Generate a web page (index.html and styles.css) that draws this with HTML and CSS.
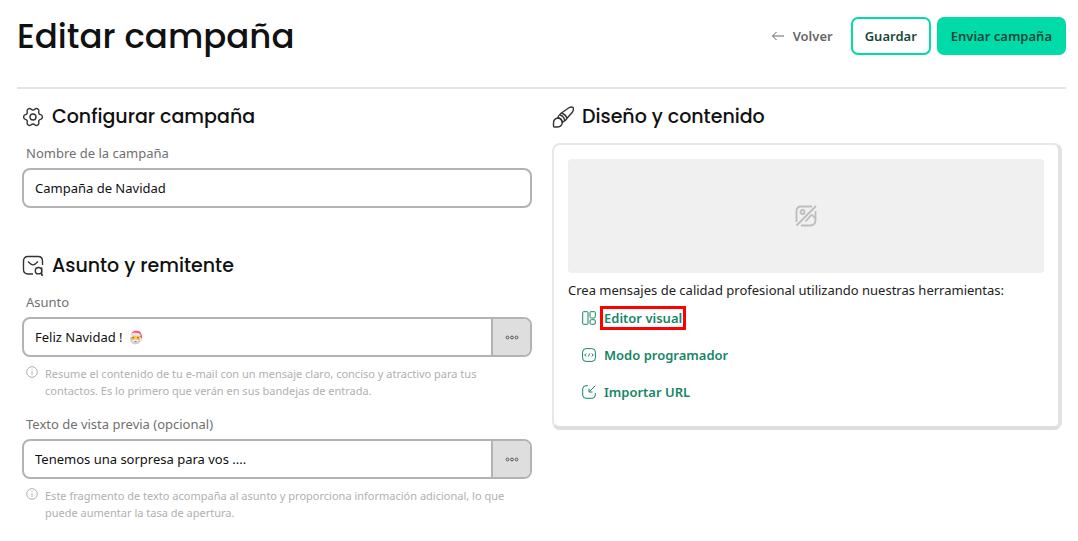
FILE: index.html
```html
<!DOCTYPE html>
<html lang="es">
<head>
<meta charset="utf-8">
<meta name="viewport" content="width=device-width, initial-scale=1">
<title>Editar campaña</title>
<link rel="stylesheet" href="styles.css">
</head>
<body>
<header class="header">
  <h1 class="title">Editar campaña</h1>
  <nav class="actions">
    <a class="back" href="#"><svg class="back-icon" viewBox="0 0 14 14"><path d="M13 7H1.500M5.500 3L1.500 7l4 4"/></svg>Volver</a>
    <button class="btn btn-outline" type="button">Guardar</button>
    <button class="btn btn-primary" type="button">Enviar campaña</button>
  </nav>
</header>
<main class="columns">
  <form class="settings">
    <section class="group">
      <h2 class="heading">
        <svg class="heading-icon" viewBox="0 0 22 22"><path d="M18.650 8.660A2.450 2.450 0 0 1 18.650 13.340A2.300 2.300 0 0 0 16.850 16.460A2.450 2.450 0 0 1 12.800 18.800A2.300 2.300 0 0 0 9.200 18.800A2.450 2.450 0 0 1 5.150 16.460A2.300 2.300 0 0 0 3.350 13.340A2.450 2.450 0 0 1 3.350 8.660A2.300 2.300 0 0 0 5.150 5.540A2.450 2.450 0 0 1 9.200 3.200A2.300 2.300 0 0 0 12.800 3.200A2.450 2.450 0 0 1 16.850 5.540A2.300 2.300 0 0 0 18.650 8.660Z"/><circle cx="11" cy="11" r="3"/></svg>
        Configurar campaña
      </h2>
      <label class="label" for="name">Nombre de la campaña</label>
      <div class="field"><input class="input" id="name" type="text" value="Campaña de Navidad"></div>
    </section>
    <section class="group">
      <h2 class="heading">
        <svg class="heading-icon" viewBox="0 0 22 22"><path d="M11 19H6Q1.500 19 1.500 14.500V6Q1.500 1.500 6 1.500H16Q20.500 1.500 20.500 6V10M6 6.500L9 9.200Q11 10.500 13 9.200L16 6.500"/><circle cx="16.500" cy="15.700" r="3.200"/><path d="M19.700 12.500V20L21 20.500"/></svg>
        Asunto y remitente
      </h2>
      <label class="label" for="subject">Asunto</label>
      <div class="field">
        <div class="entry">
          <input class="input input-fit" id="subject" type="text" size="11" value="Feliz Navidad !">
          <svg class="santa" viewBox="0 0 14 15"><path d="M2 4Q4 0 9 1Q13 1 13 9L11.500 10L11 5H2Z" fill="#ed4b67"/><path d="M1 7Q0 14 6.500 14.500Q13 14 12 7Z" fill="#d4cbdc"/><path d="M2.500 5h8.500v5Q7 13 2.500 10Z" fill="#f7c64d"/><path d="M2 3.500Q7 1.500 11.500 4v2H1.500Z" fill="#e9dce5"/><path d="M3 8l2-.5M8 7.500l2 .5" stroke="#76606a" fill="none"/><path d="M3 10.500Q6.500 8.500 10 10.500L8 12H4Z" fill="#eeeaf3"/><path d="M5.500 11.500h2" stroke="#b46676"/><circle cx="12.300" cy="9.500" r="1.300" fill="#eee8f2"/></svg>
        </div>
        <button class="more" type="button" aria-label="Más opciones del asunto"><svg class="more-icon" viewBox="0 0 14 5"><circle cx="2.500" cy="2.500" r="1.400"/><circle cx="7" cy="2.500" r="1.400"/><circle cx="11.500" cy="2.500" r="1.400"/></svg></button>
      </div>
      <p class="hint"><svg class="hint-icon" viewBox="0 0 12 12"><circle cx="6" cy="6" r="5.300"/><path d="M6 5.200V9M6 3v1"/></svg><span>Resume el contenido de tu e-mail con un mensaje claro, conciso y atractivo para tus contactos. Es lo primero que verán en sus bandejas de entrada.</span></p>
      <label class="label" for="preview">Texto de vista previa (opcional)</label>
      <div class="field">
        <input class="input" id="preview" type="text" value="Tenemos una sorpresa para vos ....">
        <button class="more" type="button" aria-label="Más opciones de la vista previa"><svg class="more-icon" viewBox="0 0 14 5"><circle cx="2.500" cy="2.500" r="1.400"/><circle cx="7" cy="2.500" r="1.400"/><circle cx="11.500" cy="2.500" r="1.400"/></svg></button>
      </div>
      <p class="hint"><svg class="hint-icon" viewBox="0 0 12 12"><circle cx="6" cy="6" r="5.300"/><path d="M6 5.200V9M6 3v1"/></svg><span>Este fragmento de texto acompaña al asunto y proporciona información adicional, lo que puede aumentar la tasa de apertura.</span></p>
    </section>
  </form>
  <section class="design">
    <h2 class="heading">
      <svg class="heading-icon" viewBox="0 0 22 22"><path d="M9.500 7L16.500 2Q19.500 .2 21 1.500Q22.200 3 20.500 6L14.800 12.500Q14.500 9 9.500 7Z"/><path d="M9.500 7Q6.500 9 5.800 12Q9.500 12 10.300 16.200Q13.500 15.500 14.800 12.500"/><path d="M8 9Q12 10 12.800 14.800"/><path d="M5.800 12Q1.500 13 1.500 17V20Q1.500 21 2.500 21H5.500Q10.300 20.500 10.300 16.200Q9.500 12 5.800 12Z"/></svg>
      Diseño y contenido
    </h2>
    <div class="card">
      <div class="placeholder"><svg class="placeholder-icon" viewBox="0 0 22 22"><path d="M1.500 20.500L21 1M1.500 17V6Q1.500 1.500 6 1.500H17M20.500 6V15Q20.500 20.500 15 20.500H6M10.500 16.500L15.500 10.800Q17 9.500 18.200 11L20.500 13.500"/><circle cx="7.500" cy="7" r="2"/></svg></div>
      <p class="intro">Crea mensajes de calidad profesional utilizando nuestras herramientas:</p>
      <ul class="tools">
        <li class="tool"><svg class="tool-icon" viewBox="0 0 14 14"><rect x=".7" y=".7" width="5.300" height="12.600" rx=".8"/><path d="M8 1.300q0-.6.600-.6h4q.7 0 .7.700v4q0 1.600-1.500 1.600H9.500Q8 7 8 5.500Z"/><rect x="8" y="8.700" width="5.300" height="4.600" rx="1.300"/></svg><a class="link link-marked" href="#">Editor visual</a></li>
        <li class="tool"><svg class="tool-icon" viewBox="0 0 14 14"><rect x=".6" y=".6" width="12.800" height="12.800" rx="3.500"/><path d="M4.300 5.700L2.700 7l1.600 1.300M9.700 5.700L11.300 7 9.700 8.300M7.600 5.500L6.400 8.500"/></svg><a class="link" href="#">Modo programador</a></li>
        <li class="tool"><svg class="tool-icon" viewBox="0 0 14 14"><path d="M6 .7H4Q.7.700.7 4v6Q.7 13.300 4 13.300h6q3.300 0 3.300-3.300V8M13.300.7L7.500 6.500M7 3.500V7h3.500"/></svg><a class="link" href="#">Importar URL</a></li>
      </ul>
    </div>
  </section>
</main>
</body>
</html>
```
FILE: styles.css
```css
* {
  box-sizing: border-box;
}

body {
  margin: 0;
  padding: 16px 12px 16px 17px;
  background: #fff;
  color: #222;
  font: 13px/18px "Noto Sans", "Open Sans", sans-serif;
}

svg {
  flex: none;
  fill: none;
  stroke: currentColor;
}

.header {
  display: flex;
  align-items: flex-start;
  justify-content: space-between;
  padding-bottom: 31px;
  border-bottom: 2px solid #e4e4e4;
}

.title,
.heading {
  margin: 0;
  color: #111;
  font-family: Poppins, Inter, sans-serif;
  font-weight: 500;
}

.title {
  font-size: 34px;
  line-height: 40px;
}

.actions {
  display: flex;
  align-items: center;
  gap: 6px;
  padding-top: 1px;
}

.back {
  display: flex;
  align-items: center;
  gap: 8px;
  margin-right: 12px;
  color: #666;
  font-weight: 600;
  text-decoration: none;
}

.back-icon {
  width: 14px;
  height: 14px;
}

.btn {
  height: 38px;
  padding: 0 12px;
  border: 2px solid #00dba7;
  border-radius: 7px;
  color: #17483d;
  font: 600 13px/18px "Noto Sans", "Open Sans", sans-serif;
}

.btn-outline {
  background: #fff;
}

.btn-primary {
  background: #00dba7;
}

.columns {
  display: grid;
  grid-template-columns: 1fr 1fr;
  gap: 20px;
  padding: 14px 4px 0 5px;
}

.group + .group {
  margin-top: 44px;
}

.heading {
  display: flex;
  align-items: center;
  gap: 8px;
  font-size: 19px;
  line-height: 28px;
}

.heading-icon {
  width: 22px;
  height: 22px;
  color: #333;
  stroke-width: 1.400;
}

.label {
  display: block;
  margin: 13px 4px 6px;
  color: #707070;
}

.field {
  display: flex;
  height: 40px;
  overflow: hidden;
  border: 2px solid #b3b3b3;
  border-radius: 8px;
}

.entry {
  display: flex;
  flex: 1;
  align-items: center;
}

.input {
  flex: 1;
  min-width: 0;
  padding: 0 11px;
  border: 0;
  outline: 0;
  background: none;
  color: #111;
  font: inherit;
}

.input-fit {
  flex: none;
  field-sizing: content;
  padding-right: 6px;
}

.santa {
  width: 14px;
  height: 15px;
  stroke: none;
}

.more {
  display: flex;
  align-items: center;
  justify-content: center;
  width: 39px;
  padding: 0;
  border: 0;
  border-left: 2px solid #b3b3b3;
  background: #dedede;
  color: #555;
}

.more-icon {
  width: 14px;
  height: 5px;
}

.hint {
  display: flex;
  gap: 7px;
  margin: 8px 4px 0;
  color: #b0b0b0;
  font-size: 11px;
  line-height: 17px;
}

.hint-icon {
  width: 12px;
  height: 12px;
  margin-top: 1px;
}

.hint + .label {
  margin-top: 16px;
}

.card {
  margin-top: 12px;
  padding: 14px 14px 22px;
  border: 2px solid #e8e8e8;
  border-right: 4px solid #e2e2e2;
  border-bottom: 4px solid #dedede;
  border-radius: 8px;
}

.placeholder {
  display: grid;
  place-items: center;
  height: 114px;
  border-radius: 4px;
  background: #f0f0f0;
  color: #bdbdbd;
}

.placeholder-icon {
  width: 22px;
  height: 22px;
  stroke-width: 1.800;
}

.intro {
  margin: 8px 0 0;
}

.tools {
  display: grid;
  gap: 13px;
  margin: 7px 0 0;
  padding: 0 0 0 14px;
  list-style: none;
}

.tool {
  display: flex;
  align-items: center;
  gap: 4px;
  color: #168565;
}

.tool-icon {
  width: 14px;
  height: 14px;
}

.link {
  padding: 0 1px;
  border: 3px solid transparent;
  color: #168565;
  font-weight: 600;
  text-decoration: none;
}

.link-marked {
  border-color: #f00;
}
```
